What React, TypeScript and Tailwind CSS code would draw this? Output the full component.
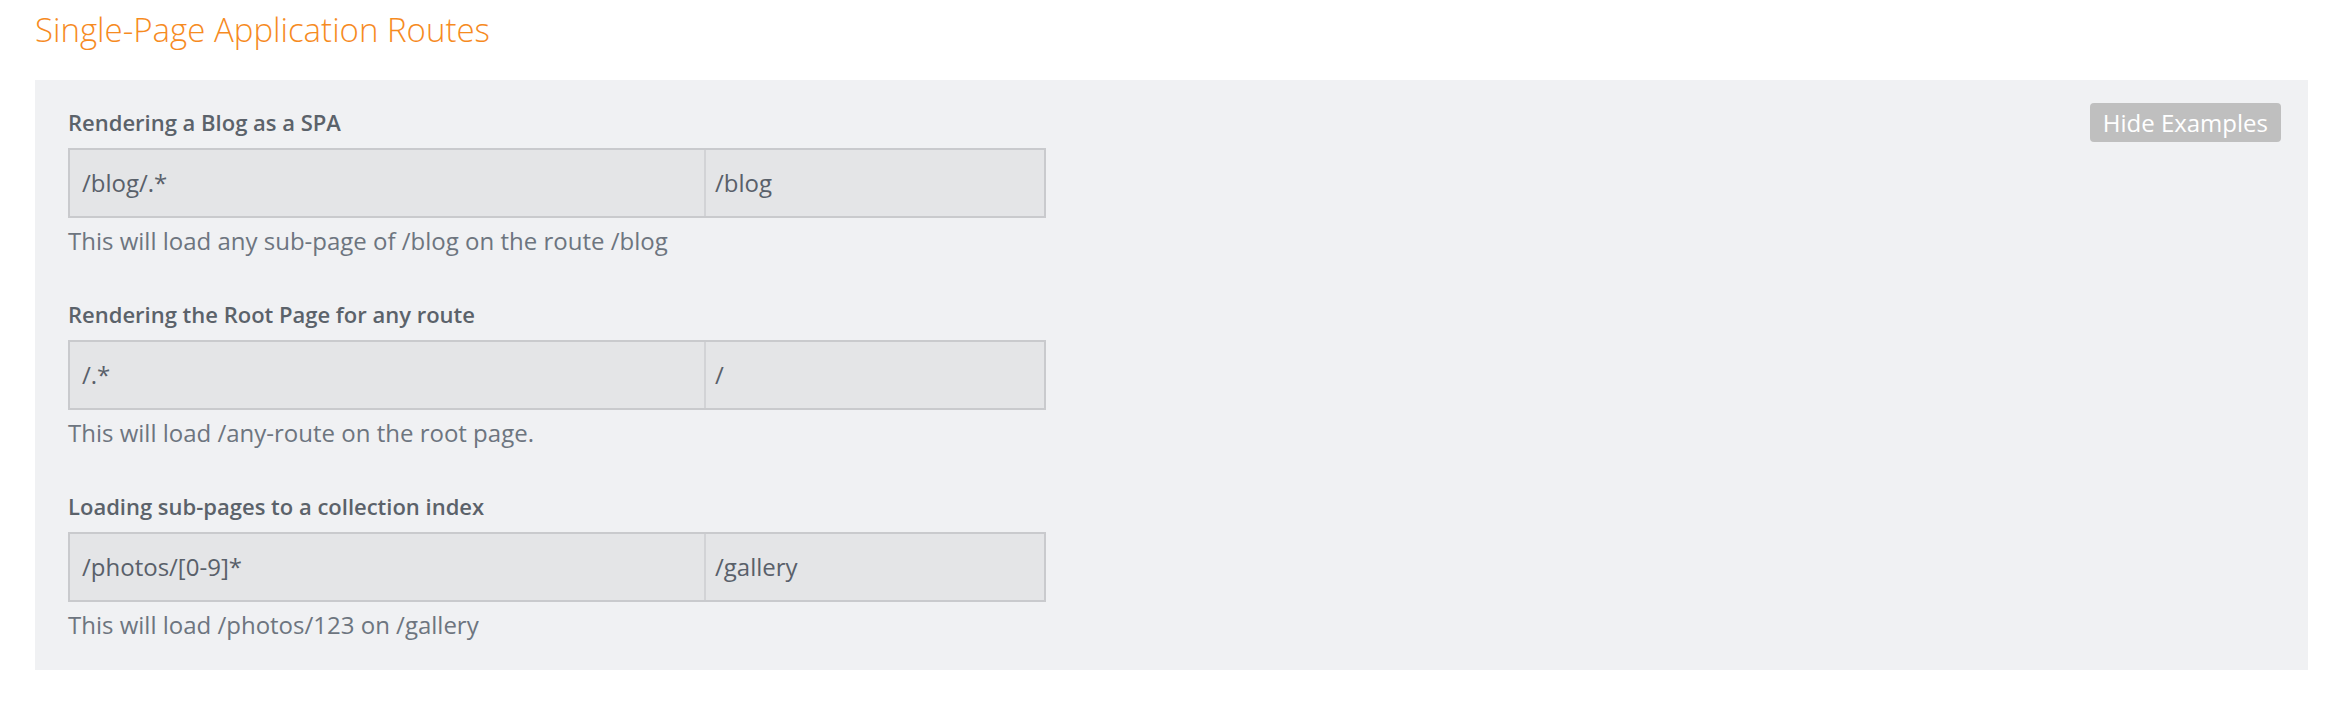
const examples = [
  {
    title: 'Rendering a Blog as a SPA',
    source: '/blog/.*',
    target: '/blog',
    note: 'This will load any sub-page of /blog on the route /blog',
  },
  {
    title: 'Rendering the Root Page for any route',
    source: '/.*',
    target: '/',
    note: 'This will load /any-route on the root page.',
  },
  {
    title: 'Loading sub-pages to a collection index',
    source: '/photos/[0-9]*',
    target: '/gallery',
    note: 'This will load /photos/123 on /gallery',
  },
]

type Example = (typeof examples)[number]

function ExampleBlock({ example }: { example: Example }) {
  return (
    <div className="flex flex-col">
      <div className="h-[30px] text-[22px] leading-[30px] font-semibold text-[#5b626a]">{example.title}</div>
      <div className="mt-[11px] flex w-[978px] h-[70px] border-2 border-[#c9cacd] bg-[#e4e5e7] text-[24px] text-[#59606a]">
        <div className="w-[636px] flex items-center pl-[12px] border-r-2 border-[#d2d3d6]">{example.source}</div>
        <div className="flex-1 flex items-center pl-[9px]">{example.target}</div>
      </div>
      <div className="mt-[8px] h-[30px] text-[24px] leading-[30px] text-[#6d757f]">{example.note}</div>
    </div>
  )
}

export default function App() {
  return (
    <div className="min-h-[703px] bg-white font-['Open_Sans',sans-serif]">
      <h2 className="pl-[35px] pt-[7px] h-[80px] text-[33px] leading-[45px] font-light text-[#f68b1f]">
        Single-Page Application Routes
      </h2>
      <div className="ml-[35px] mr-[44px] h-[590px] bg-[#f0f1f3] pl-[33px] pr-[27px] pt-[27px] flex justify-between">
        <div className="flex flex-col gap-[43px]">
          {examples.map((example) => (
            <ExampleBlock key={example.title} example={example} />
          ))}
        </div>
        <div>
          <button className="-mt-[4px] h-[39px] px-[13px] rounded-[4px] bg-[#bfbfbf] text-white text-[24px] leading-[39px]">
            Hide Examples
          </button>
        </div>
      </div>
    </div>
  )
}
